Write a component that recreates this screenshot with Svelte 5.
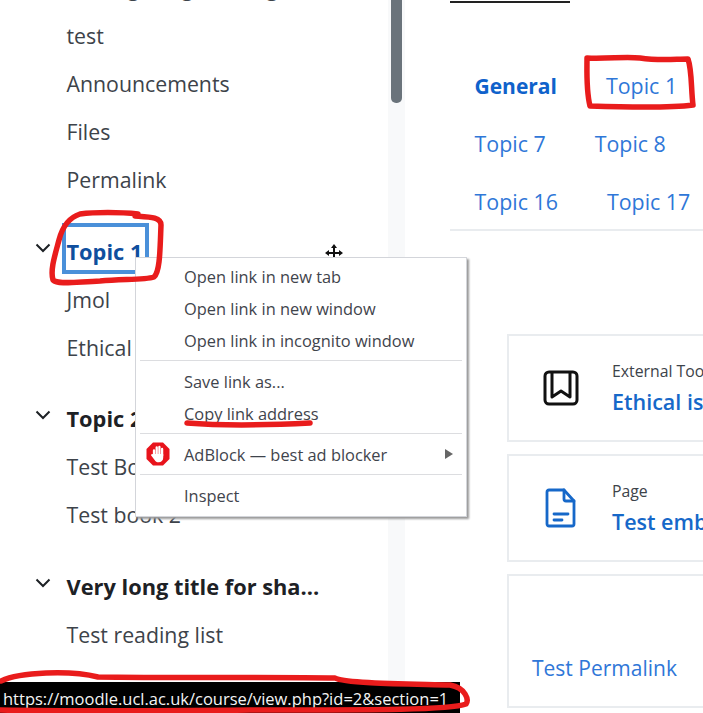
<script lang="ts">
	// course index + section nav, with the browser context menu and scribbled annotations on top
	const sections = [
		{ title: '', items: ['Moving image testing', 'test', 'Announcements', 'Files', 'Permalink'] },
		{ title: 'Topic 1', focus: true, items: ['Jmol', 'Ethical issues'] },
		{ title: 'Topic 2', items: ['Test Book', 'Test book 2'] },
		{ title: 'Very long title for sha...', items: ['Test reading list'] }
	];
	const navRows = [
		['General', 'Topic 1'],
		['Topic 7', 'Topic 8'],
		['Topic 16', 'Topic 17']
	];
	const menuGroups = [
		['Open link in new tab', 'Open link in new window', 'Open link in incognito window'],
		['Save link as...', 'Copy link address'],
		['AdBlock — best ad blocker'],
		['Inspect']
	];
</script>

<div class="page">
	<aside class="sidebar">
		<div class="index">
			{#each sections as section}
				<div class="section">
					{#if section.title}
						<div class="row head">
							<svg class="chevron" viewBox="0 0 16 10" width="16" height="10"><path d="M1.5 1.5 8 8l6.5-6.5" fill="none" stroke="#1d2125" stroke-width="2"/></svg>
							<span class:focus={section.focus}>{section.title}</span>
						</div>
					{/if}
					{#each section.items as item}
						<div class="row">{item}</div>
					{/each}
				</div>
			{/each}
		</div>
		<div class="track"><div class="thumb"></div></div>
	</aside>

	<main class="content">
		<div class="tab-line"></div>
		<nav class="sections-nav">
			{#each navRows as row}
				<div class="nav-row">
					{#each row as label}
						<span class:active={label === 'General'}>{label}</span>
					{/each}
				</div>
			{/each}
		</nav>
		<div class="cards">
			<div class="card">
				<svg class="icon" viewBox="0 0 36 36" width="36" height="36" fill="none" stroke="#111" stroke-width="3" stroke-linejoin="round">
					<rect x="2" y="2" width="32" height="32" rx="4"/>
					<path d="M9 2v25l9-6 9 6V2"/>
				</svg>
				<div class="card-text">
					<div class="kind">External Tool</div>
					<div class="name">Ethical issues</div>
				</div>
			</div>
			<div class="card">
				<svg class="icon" viewBox="0 0 36 40" width="36" height="40" fill="none" stroke="#1668c9" stroke-width="2.8" stroke-linejoin="round" stroke-linecap="round">
					<path d="M6 2h15l10 11v23a2 2 0 0 1-2 2H6a2 2 0 0 1-2-2V4a2 2 0 0 1 2-2z"/>
					<path d="M21 2v9a2 2 0 0 0 2 2h8"/>
					<path d="M11 26h14M11 32h8"/>
				</svg>
				<div class="card-text">
					<div class="kind">Page</div>
					<div class="name">Test embedded</div>
				</div>
			</div>
			<div class="card last"><span class="plain-link">Test Permalink</span></div>
		</div>
	</main>

	<svg class="cursor" viewBox="0 0 20 20" width="20" height="20" fill="#111">
		<path d="M10 1 7 5h2v4H5V7L1 10l4 3v-2h4v4H7l3 4 3-4h-2v-4h4v2l4-3-4-3v2h-4V5h2z"/>
	</svg>

	<div class="menu">
		{#each menuGroups as group, g}
			{#if g > 0}<div class="sep"></div>{/if}
			{#each group as item}
				<div class="menu-item">
					{#if item.startsWith('AdBlock')}
						<svg class="adblock" viewBox="0 0 24 24" width="24" height="24">
							<path d="M7 .5h10L23.500 7v10L17 23.500H7L.5 17V7z" fill="#e8131b"/>
							<g stroke="#fff" stroke-width="2.300" stroke-linecap="round">
								<path d="M8 14V8.500M10.700 13V5.500M13.400 13V5M16.100 14V7"/>
							</g>
							<path d="M7 12h10.200v4c0 2.600-2 4.300-4.500 4.300-2 0-3.200-.9-4.100-2.300L5.200 13.600c-.6-1 .8-2 1.800-1.200z" fill="#fff"/>
						</svg>
					{/if}
					<span>{item}</span>
					{#if item.startsWith('AdBlock')}<i class="arrow"></i>{/if}
				</div>
			{/each}
		{/each}
	</div>

	<div class="status">https://moodle.ucl.ac.uk/course/view.php?id=2&amp;section=1</div>

	<!-- red pen marks -->
	<svg class="marks" viewBox="0 0 703 713" width="703" height="713" fill="none" stroke="#e91c1c" stroke-width="5.500" stroke-linecap="round" stroke-linejoin="round">
		<path d="M138 214C120 212 95 212 80 214 68 218 62 228 59 240 55 255 50 270 53 280 58 285 75 282 100 281 125 279 145 280 154 277 160 272 160 250 161 225 161 217 150 217 135 216"/>
		<path d="M587 58C610 59 625 56 640 58 660 61 675 59 688 59 692 70 691 90 693 105 670 108 620 107 590 106 586 90 587 70 587 58z"/>
		<path d="M187 423C225 426 270 425 310 423"/>
		<path d="M1 681C20 672 70 670 98 677 160 678 280 677 335 678 345 684 420 684 450 685 466 688 469 700 466 704 450 710 380 710 250 710 150 711 50 711 1 710"/>
	</svg>
</div>

<style>
	:global(body) {
		background: #fff;
	}

	.page {
		position: relative;
		width: 703px;
		height: 713px;
		overflow: hidden;
		display: flex;
		background: #fff;
		font-family: 'Open Sans', 'Noto Sans', sans-serif;
		color: #1d2125;
	}

	.sidebar {
		width: 450px;
		flex: none;
		display: flex;
		height: 713px;
	}

	.index {
		width: 388px;
		margin-top: -36px;
		font-size: 21.300px;
		color: #3d434a;
	}

	.section + .section {
		margin-top: 23.500px;
	}

	.row {
		height: 48px;
		line-height: 48px;
		padding-left: 66.500px;
		white-space: nowrap;
		position: relative;
	}

	.head {
		font-weight: 700;
		font-size: 21.800px;
		color: #1d2125;
	}

	.chevron {
		position: absolute;
		left: 35px;
		top: 15px;
	}

	.focus {
		display: inline-block;
		line-height: 30px;
		padding: 9px 2px 2px 0;
		color: #0f4f9e;
		outline: 4px solid #4a90d9;
		outline-offset: 1px;
	}

	.track {
		width: 17px;
		height: 690px;
		background: #f8f9fa;
		padding: 0 3px;
		box-sizing: border-box;
	}

	.thumb {
		width: 11px;
		height: 103px;
		background: #6a737b;
		border-radius: 0 0 5px 5px;
	}

	.content {
		flex: 1;
		min-width: 0;
		overflow: hidden;
	}

	.tab-line {
		width: 120px;
		height: 2px;
		margin-top: 1px;
		background: #222;
	}

	.sections-nav {
		height: 228px;
		box-sizing: border-box;
		padding: 67px 0 0 25px;
		border-bottom: 2px solid #e9ecef;
		display: flex;
		flex-direction: column;
		gap: 26px;
		font-size: 21.400px;
		line-height: 32px;
		color: #2f77d8;
	}

	.nav-row {
		display: flex;
		gap: 49px;
		margin-left: -0.5px;
	}

	.active {
		color: #0f62cb;
		font-weight: 700;
		font-size: 21px;
	}

	.cards {
		margin: 103px 0 0 57px;
		width: 240px;
		display: flex;
		flex-direction: column;
		gap: 12px;
	}

	.card {
		height: 108px;
		box-sizing: border-box;
		border: 2px solid #e9ecef;
		display: flex;
		align-items: center;
		padding-left: 34px;
		gap: 33px;
		white-space: nowrap;
	}

	.card.last {
		height: 134px;
		padding: 77px 0 0 23px;
		align-items: flex-start;
	}

	.icon {
		flex: none;
	}

	.kind {
		font-size: 15.800px;
		line-height: 22px;
		color: #3d434a;
	}

	.name {
		margin-top: 5px;
		font-size: 21.500px;
		line-height: 30px;
		font-weight: 600;
		color: #1668c9;
	}

	.plain-link {
		font-size: 21px;
		line-height: 30px;
		color: #2f77d8;
	}

	.cursor {
		position: absolute;
		left: 324px;
		top: 243px;
	}

	.menu {
		position: absolute;
		left: 135px;
		top: 257px;
		width: 332px;
		height: 260px;
		box-sizing: border-box;
		padding-top: 3px;
		background: #fff;
		border: 1px solid #d3d5da;
		box-shadow: 2px 2px 2px #9a9a9a;
		font-size: 16.400px;
		color: #3f444c;
	}

	.menu-item {
		position: relative;
		height: 32px;
		line-height: 32px;
		padding-left: 48px;
		white-space: nowrap;
	}

	.adblock {
		position: absolute;
		left: 10px;
		top: 3px;
	}

	.arrow {
		position: absolute;
		right: 13px;
		top: 10px;
		border-left: 8px solid #666;
		border-top: 5px solid transparent;
		border-bottom: 5px solid transparent;
	}

	.sep {
		height: 1px;
		margin: 3px 4px 5px;
		background: #dcdde0;
	}

	.status {
		position: absolute;
		left: 0;
		bottom: 0;
		width: 460px;
		height: 31px;
		box-sizing: border-box;
		padding: 5px 0 0 3px;
		background: #000;
		color: #f4f4f4;
		font-size: 16.500px;
		line-height: 24px;
		white-space: nowrap;
		overflow: hidden;
	}

	.marks {
		position: absolute;
		left: 0;
		top: 0;
		pointer-events: none;
	}
</style>
